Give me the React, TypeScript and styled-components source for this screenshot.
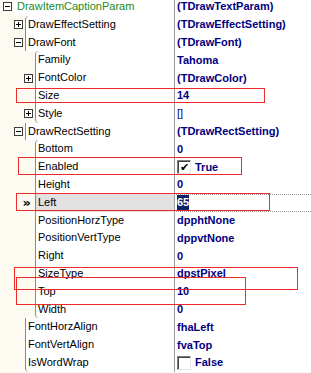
import React from 'react';
import styled, { createGlobalStyle } from 'styled-components';

type ValueKind = 'text' | 'plain' | 'check';

interface PropRow {
  name: string;
  value: string;
  level: number;
  expander?: 'plus' | 'minus';
  kind?: ValueKind;
  checked?: boolean;
  root?: boolean;
  first?: boolean;
  last?: boolean;
  selected?: boolean;
}

const rows: PropRow[] = [
  { name: 'DrawItemCaptionParam', value: '(TDrawTextParam)', level: 0, expander: 'minus', root: true },
  { name: 'DrawEffectSetting', value: '(TDrawEffectSetting)', level: 1, expander: 'plus', first: true },
  { name: 'DrawFont', value: '(TDrawFont)', level: 1, expander: 'minus' },
  { name: 'Family', value: 'Tahoma', level: 2, first: true },
  { name: 'FontColor', value: '(TDrawColor)', level: 2, expander: 'plus' },
  { name: 'Size', value: '14', level: 2 },
  { name: 'Style', value: '[]', level: 2, expander: 'plus', kind: 'plain', last: true },
  { name: 'DrawRectSetting', value: '(TDrawRectSetting)', level: 1, expander: 'minus' },
  { name: 'Bottom', value: '0', level: 2, first: true },
  { name: 'Enabled', value: 'True', level: 2, kind: 'check', checked: true },
  { name: 'Height', value: '0', level: 2 },
  { name: 'Left', value: '65', level: 2, selected: true },
  { name: 'PositionHorzType', value: 'dpphtNone', level: 2 },
  { name: 'PositionVertType', value: 'dppvtNone', level: 2 },
  { name: 'Right', value: '0', level: 2 },
  { name: 'SizeType', value: 'dpstPixel', level: 2 },
  { name: 'Top', value: '10', level: 2 },
  { name: 'Width', value: '0', level: 2, last: true },
  { name: 'FontHorzAlign', value: 'fhaLeft', level: 1 },
  { name: 'FontVertAlign', value: 'fvaTop', level: 1 },
  { name: 'IsWordWrap', value: 'False', level: 1, kind: 'check', checked: false, last: true },
];

// red annotation boxes drawn over the grid
const marks = [
  { left: 16, top: 88, width: 249, height: 15 },
  { left: 18, top: 157, width: 224, height: 18 },
  { left: 16, top: 193, width: 254, height: 18 },
  { left: 14, top: 267, width: 284, height: 23 },
  { left: 16, top: 277, width: 230, height: 28 },
];

const gutterWidth = [14, 25, 35];

const GlobalStyle = createGlobalStyle`
  html, body {
    margin: 0;
    padding: 0;
    background: #fdfaf1;
  }
  body {
    font-family: "Liberation Sans", Arial, sans-serif;
    font-size: 11px;
  }
`;

const Inspector = styled.div`
  position: relative;
  width: 311px;
  height: 373px;
  overflow: hidden;
  background: #fdfaf1;
`;

const List = styled.div`
  margin-top: -2px;
  display: flex;
  flex-direction: column;
`;

const Row = styled.div`
  display: grid;
  grid-template-columns: 174px 1fr;
  height: 17.8px;
  line-height: 17.8px;
`;

const NamePart = styled.div`
  display: flex;
  min-width: 0;
`;

const Gutter = styled.div<{ $width: number }>`
  flex: 0 0 ${p => p.$width}px;
  display: flex;
  align-items: center;
  justify-content: flex-end;
  padding-right: 2px;
  box-sizing: border-box;
`;

const Expander = styled.span`
  width: 9px;
  height: 9px;
  box-sizing: border-box;
  border: 1px solid #3c3c3c;
  background: #fff;
  position: relative;
  &::before {
    content: '';
    position: absolute;
    left: 1px;
    top: 3px;
    width: 5px;
    height: 1px;
    background: #000;
  }
`;

const PlusExpander = styled(Expander)`
  &::after {
    content: '';
    position: absolute;
    left: 3px;
    top: 1px;
    width: 1px;
    height: 5px;
    background: #000;
  }
`;

const Marker = styled.span`
  font-family: "DejaVu Sans", sans-serif;
  font-weight: bold;
  font-size: 13px;
  color: #000;
  margin-right: 2px;
`;

const NameCell = styled.div<{ $line: boolean; $first?: boolean; $last?: boolean; $selected?: boolean; $root?: boolean }>`
  flex: 1;
  min-width: 0;
  white-space: nowrap;
  overflow: hidden;
  padding-left: ${p => (p.$line ? 2 : 3)}px;
  border-left: ${p => (p.$line ? '1px solid #8a8a8a' : '0')};
  border-top-left-radius: ${p => (p.$first ? '4px' : '0')};
  border-bottom-left-radius: ${p => (p.$last ? '4px' : '0')};
  background: ${p => (p.$selected ? '#e1e1e1' : '#fff')};
  color: ${p => (p.$root ? '#1c8a1c' : '#000')};
`;

const ValueCell = styled.div<{ $selected?: boolean }>`
  display: flex;
  align-items: center;
  gap: 4px;
  padding-left: 2px;
  border-left: 1px solid #9a9a9a;
  background: #fff;
  white-space: nowrap;
  overflow: hidden;
  box-sizing: border-box;
  border-top: ${p => (p.$selected ? '1px dotted #9a9a9a' : '0')};
  border-bottom: ${p => (p.$selected ? '1px dotted #9a9a9a' : '0')};
  line-height: 15px;
`;

const Value = styled.span<{ $plain?: boolean; $selected?: boolean }>`
  color: ${p => (p.$selected ? '#fff' : '#000080')};
  background: ${p => (p.$selected ? '#0a246a' : 'transparent')};
  font-weight: ${p => (p.$plain ? 'normal' : 'bold')};
`;

const CheckBox = styled.span`
  width: 14px;
  height: 14px;
  box-sizing: border-box;
  border: 1px solid;
  border-color: #808080 #e6e6e6 #e6e6e6 #808080;
  box-shadow: inset 1px 1px 0 #404040;
  background: #fff;
  display: flex;
  align-items: center;
  justify-content: center;
  font-size: 11px;
  line-height: 1;
  color: #000;
`;

const Mark = styled.div`
  position: absolute;
  border: 1.5px solid #ee2a2a;
  box-sizing: border-box;
  pointer-events: none;
`;

function renderGutter(r: PropRow) {
  if (r.selected) return <Marker>»</Marker>;
  if (r.expander === 'plus') return <PlusExpander />;
  if (r.expander === 'minus') return <Expander />;
  return null;
}

export default function App() {
  return (
    <>
      <GlobalStyle />
      <Inspector>
        <List>
          {rows.map(r => (
            <Row key={r.name}>
              <NamePart>
                <Gutter $width={gutterWidth[r.level]}>{renderGutter(r)}</Gutter>
                <NameCell
                  $line={r.level > 0}
                  $first={r.first}
                  $last={r.last}
                  $selected={r.selected}
                  $root={r.root}
                >
                  {r.name}
                </NameCell>
              </NamePart>
              <ValueCell $selected={r.selected}>
                {r.kind === 'check' && <CheckBox>{r.checked ? '✔' : ''}</CheckBox>}
                <Value $plain={r.kind === 'plain'} $selected={r.selected}>
                  {r.value}
                </Value>
              </ValueCell>
            </Row>
          ))}
        </List>
        {marks.map((m, i) => (
          <Mark key={i} style={{ left: m.left, top: m.top, width: m.width, height: m.height }} />
        ))}
      </Inspector>
    </>
  );
}
